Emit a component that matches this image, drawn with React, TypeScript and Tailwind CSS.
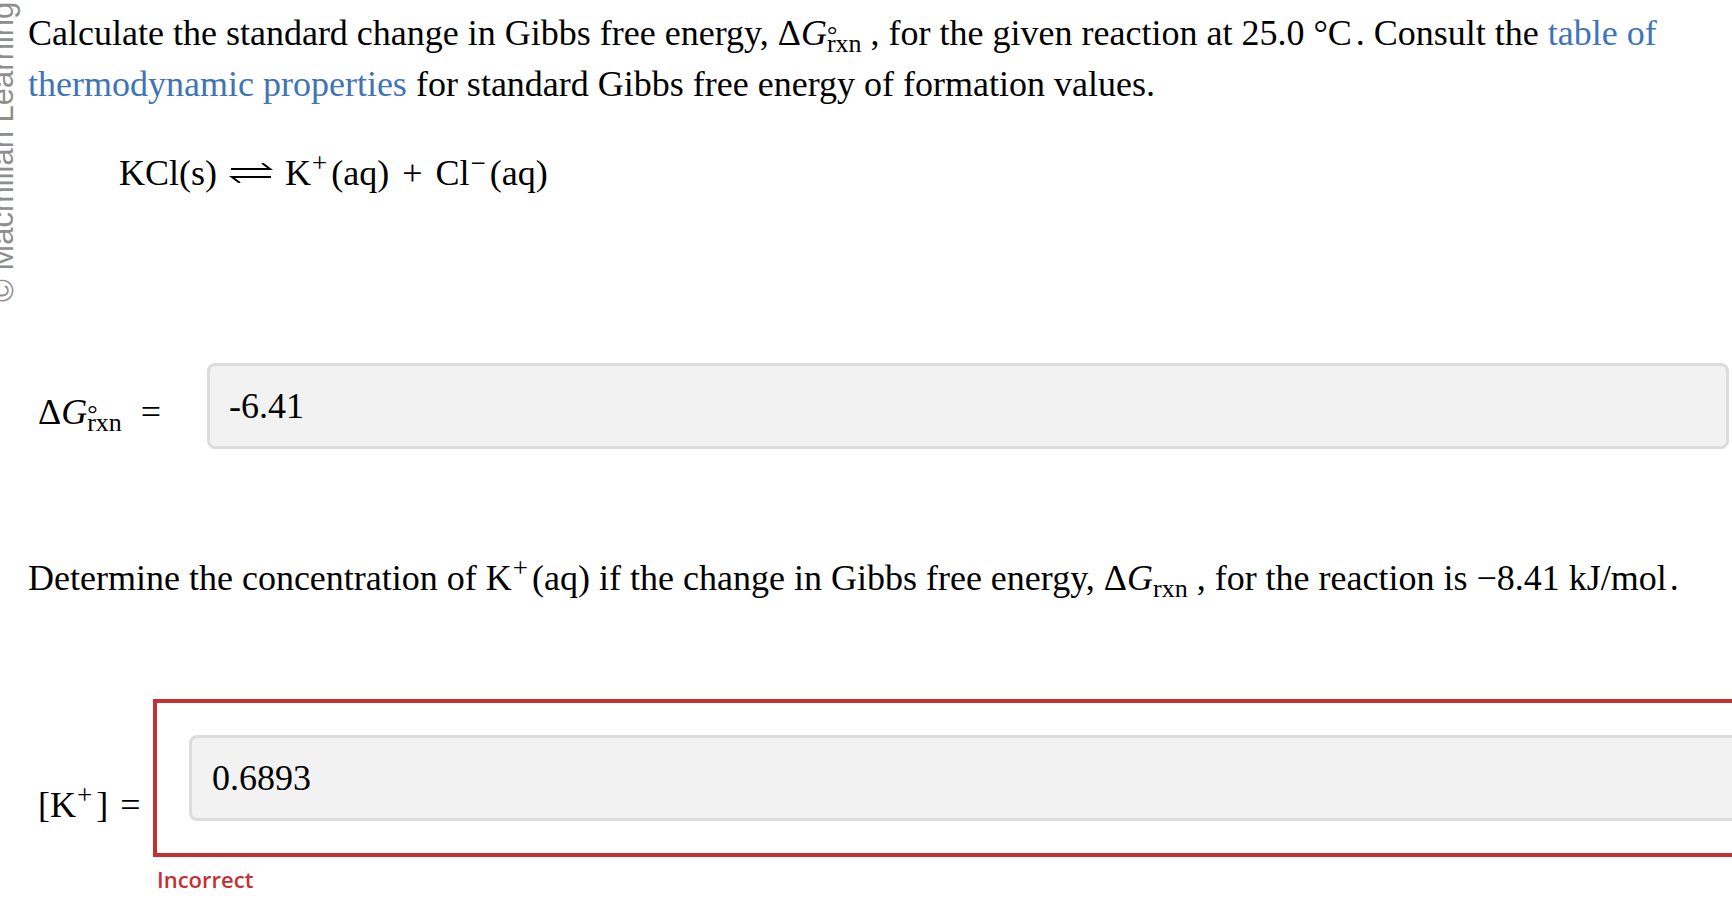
import React from 'react';

function DeltaG({ circ = false }: { circ?: boolean }) {
  return (
    <span className="whitespace-nowrap">
      Δ<i>G</i>
      <sub className="relative text-[26px]">
        {circ && (
          <span className="absolute left-0 top-[-7px] text-[26px] leading-none">°</span>
        )}
        rxn
      </sub>
    </span>
  );
}

function Sup({ children }: { children: React.ReactNode }) {
  return <sup className="ml-[1px] mr-[4px]">{children}</sup>;
}

function HarpoonArrow() {
  return (
    <svg width="44" height="20" viewBox="0 0 44 20" className="mx-[12px] inline-block align-[2px]" fill="none" stroke="black" strokeWidth="2">
      <path d="M2 6 H41 L33 0" />
      <path d="M42 14 H3 L11 20" />
    </svg>
  );
}

export default function App() {
  return (
    <div className="relative h-[924px] w-[1732px] overflow-hidden bg-white">
      {/* watermark */}
      <div className="absolute left-[-13px] top-[302px] origin-top-left -rotate-90 whitespace-nowrap font-['Liberation_Sans',Arial,sans-serif] text-[31px] leading-[31px] text-[#8e8e8e]">
        © Macmillan Learning
      </div>

      <div className="pl-[28px] pt-[8px] font-['Liberation_Serif','Times_New_Roman',serif] text-[36px] leading-[51px] text-black">
        <p>
          Calculate the standard change in Gibbs free energy, <DeltaG circ /> , for the given reaction at 25.0 °C<span className="ml-[4px]">.</span> Consult the{' '}
          <a className="text-[#3f74b6]">table of thermodynamic properties</a> for standard Gibbs free energy of formation values.
        </p>

        <div className="mt-[38px] pl-[91px]">
          KCl(s)
          <HarpoonArrow />
          K<Sup>+</Sup>(aq)<span className="mx-[4px]"> + </span>Cl<Sup>−</Sup>(aq)
        </div>

        <div className="mt-[164px] flex items-start">
          <div className="w-[179px] shrink-0 pl-[10px] pt-[24px]">
            <DeltaG circ /> <span className="ml-[10px]">=</span>
          </div>
          <input
            readOnly
            value="-6.41"
            className="mr-[3px] h-[86px] min-w-0 flex-1 rounded-[8px] border-[3px] border-[#dcdcdc] bg-[#f2f2f2] px-[19px] text-[36px] text-black outline-none"
          />
        </div>

        <p className="mt-[104px]">
          Determine the concentration of K<Sup>+</Sup>(aq) if the change in Gibbs free energy, <DeltaG /> , for the reaction is −8.41 kJ/mol<span className="ml-[3px]">.</span>
        </p>

        <div className="mt-[95px] flex items-start">
          <div className="w-[125px] shrink-0 whitespace-nowrap pl-[10px] pt-[81px]">
            [K<Sup>+</Sup>]<span className="ml-[12px]">=</span>
          </div>
          <div className="w-[1640px] shrink-0 border-4 border-[#c53030] p-[32px]">
            <input
              readOnly
              value="0.6893"
              className="h-[86px] w-full rounded-[8px] border-[3px] border-[#dcdcdc] bg-[#f2f2f2] px-[20px] text-[36px] text-black outline-none"
            />
          </div>
        </div>

        <div className="ml-[129px] mt-[7px] font-['Open_Sans',sans-serif] text-[22px] font-semibold leading-[31px] text-[#c53030]">
          Incorrect
        </div>
      </div>
    </div>
  );
}
